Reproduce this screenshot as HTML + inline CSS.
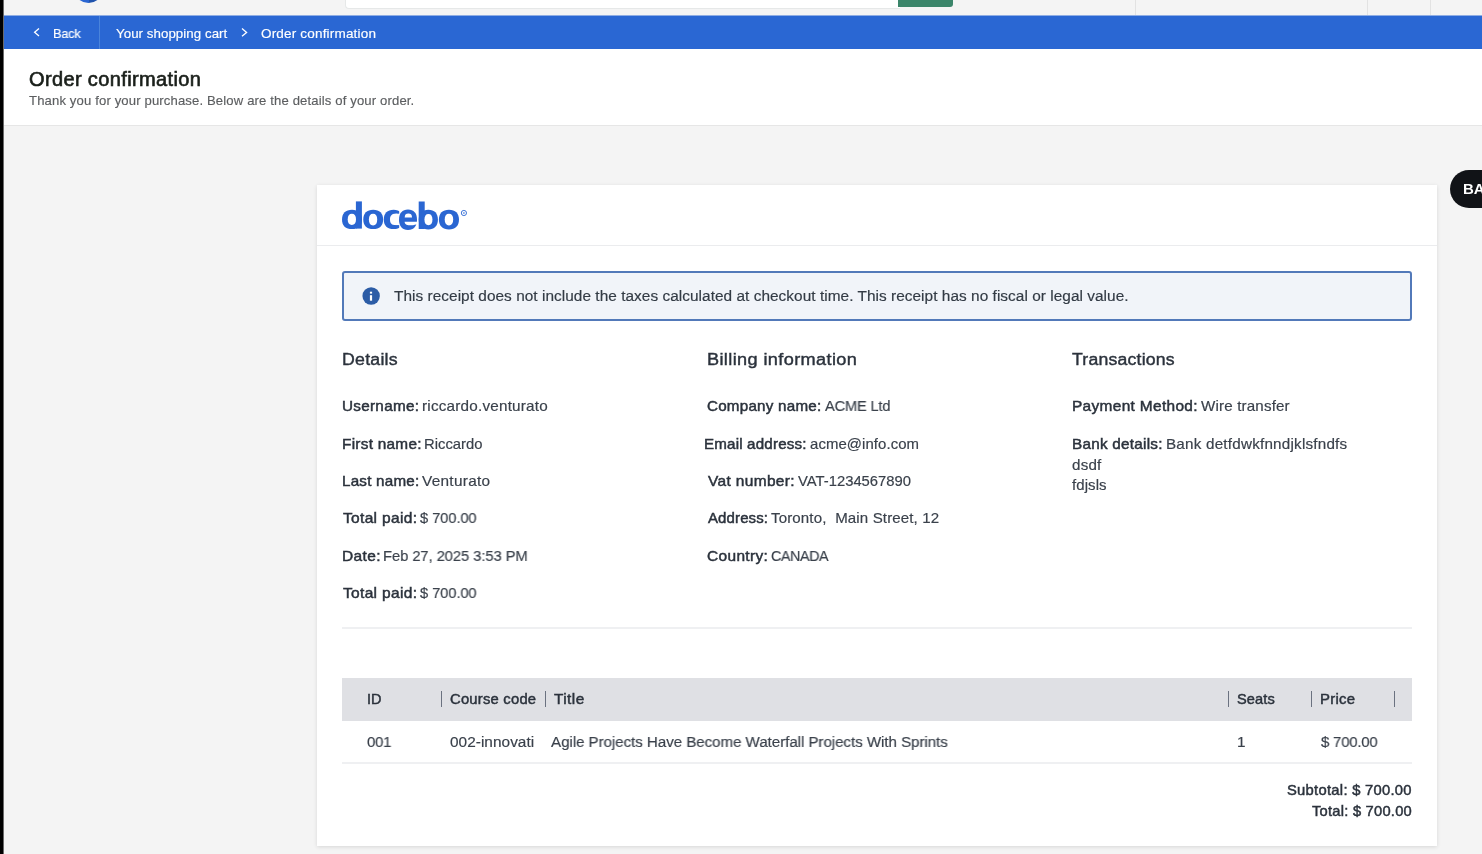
<!DOCTYPE html>
<html><head><meta charset="utf-8"><style>
*{box-sizing:border-box;margin:0;padding:0}
html,body{width:1482px;height:854px;overflow:hidden;background:#f4f4f4;font-family:"Liberation Sans",sans-serif}
.t{position:absolute;white-space:nowrap;line-height:0;will-change:transform;transform-origin:0 0}
.a{position:absolute}
</style></head><body>
<div class="a" style="left:0;top:0;width:1482px;height:15px;background:#f4f4f4"></div>
<div class="a" style="left:74px;top:-25.8px;width:28.8px;height:28.8px;border-radius:50%;background:linear-gradient(90deg,#2a66d2 0%,#2a66d2 53%,#1f52ac 53%,#1f52ac 100%)"></div>
<div class="a" style="left:345px;top:-5px;width:555px;height:14px;background:#fff;border:1px solid #e6e8e8;border-right:0;border-radius:0 0 0 4px"></div>
<div class="a" style="left:898px;top:-4px;width:55px;height:11px;background:#3b856a;border-radius:0 0 3px 0"></div>
<div class="a" style="left:1135px;top:0;width:1px;height:15px;background:#e2e2e2"></div>
<div class="a" style="left:1367px;top:0;width:1px;height:15px;background:#e2e2e2"></div>
<div class="a" style="left:1430px;top:0;width:1px;height:15px;background:#e2e2e2"></div>
<div class="a" style="left:0;top:15px;width:1482px;height:1px;background:#8fade3"></div><div class="a" style="left:0;top:16px;width:1482px;height:33px;background:#2a67d3"></div>
<div class="a" style="left:99px;top:16px;width:1px;height:33px;background:#4a84db"></div>
<div class="a" style="left:0;top:49px;width:1482px;height:76px;background:#fff"></div>
<div class="a" style="left:0;top:125px;width:1482px;height:1px;background:#e6e6e6"></div>
<div class="a" style="left:317px;top:185px;width:1120px;height:661px;background:#fff;box-shadow:0 1px 4px rgba(0,0,0,0.12)"></div>
<div class="a" style="left:317px;top:245px;width:1120px;height:1px;background:#ebecee"></div>
<div class="a" style="left:342px;top:271px;width:1070px;height:50px;background:#f1f4f9;border:2px solid #5279b9;border-radius:3px"></div>
<div class="a" style="left:342px;top:627px;width:1070px;height:2px;background:#eff0f2"></div>
<div class="a" style="left:342px;top:678px;width:1070px;height:43px;background:#dfe0e4"></div>
<div class="a" style="left:342px;top:762px;width:1070px;height:2px;background:#eff0f2"></div>
<div class="a" style="left:0;top:0;width:3px;height:854px;background:#000"></div><div class="a" style="left:3px;top:0;width:1px;height:854px;background:#6a6a6a"></div>
<div class="a" style="left:1450px;top:170px;width:60px;height:38px;border-radius:19px;background:#111317"></div>
<div class="t" style="left:1462.5px;top:189px;font-size:15px;font-weight:700;color:#fff">BA</div>
<svg class="a" style="left:0;top:0" width="1482" height="854" viewBox="0 0 1482 854">
<path d="M362.00 219.40 C362.00 225.61 358.40 229.10 352.00 229.10 C345.60 229.10 342.00 225.61 342.00 219.40 C342.00 213.19 345.60 209.70 352.00 209.70 C358.40 209.70 362.00 213.19 362.00 219.40 Z" fill="#2a66d2"/>
<rect x="355.9" y="201.4" width="6" height="27.2" fill="#2a66d2"/>
<path d="M356.00 219.35 C356.00 223.08 354.59 225.00 351.85 225.00 C349.11 225.00 347.70 223.08 347.70 219.35 C347.70 215.62 349.11 213.70 351.85 213.70 C354.59 213.70 356.00 215.62 356.00 219.35 Z" fill="#fff"/>
<path d="M383.10 219.40 C383.10 225.61 379.54 229.10 373.20 229.10 C366.86 229.10 363.30 225.61 363.30 219.40 C363.30 213.19 366.86 209.70 373.20 209.70 C379.54 209.70 383.10 213.19 383.10 219.40 Z" fill="#2a66d2"/>
<path d="M377.20 219.60 C377.20 223.49 375.79 225.50 373.05 225.50 C370.31 225.50 368.90 223.49 368.90 219.60 C368.90 215.71 370.31 213.70 373.05 213.70 C375.79 213.70 377.20 215.71 377.20 219.60 Z" fill="#fff"/>
<path d="M403.40 219.40 C403.40 225.61 399.87 229.10 393.60 229.10 C387.33 229.10 383.80 225.61 383.80 219.40 C383.80 213.19 387.33 209.70 393.60 209.70 C399.87 209.70 403.40 213.19 403.40 219.40 Z" fill="#2a66d2"/>
<path d="M400.80 219.40 C400.80 223.16 398.96 225.10 395.40 225.10 C391.84 225.10 390.00 223.16 390.00 219.40 C390.00 215.64 391.84 213.70 395.40 213.70 C398.96 213.70 400.80 215.64 400.80 219.40 Z" fill="#fff"/>
<rect x="395.4" y="213.7" width="8" height="11.4" fill="#fff"/>
<rect x="399.2" y="208" width="6" height="23" fill="#fff"/>
<path d="M417.00 219.75 C417.00 226.28 413.76 229.95 408.00 229.95 C402.24 229.95 399.00 226.28 399.00 219.75 C399.00 213.22 402.24 209.55 408.00 209.55 C413.76 209.55 417.00 213.22 417.00 219.75 Z" fill="#2a66d2"/>
<path d="M404.7 217.5 C404.8 214.6 406 213.6 408.35 213.6 C410.7 213.6 411.9 214.6 412 217.5 Z" fill="#fff"/>
<path d="M404.6 221.7 L418 221.7 L418 224.5 L415.8 224.5 C413.5 225.2 411.5 225.4 409.8 225.3 C406 225.1 404.8 223.8 404.6 221.7 Z" fill="#fff"/>
<rect x="418.7" y="201.5" width="6" height="27.5" fill="#2a66d2"/>
<path d="M437.90 219.60 C437.90 225.94 434.44 229.50 428.30 229.50 C422.16 229.50 418.70 225.94 418.70 219.60 C418.70 213.26 422.16 209.70 428.30 209.70 C434.44 209.70 437.90 213.26 437.90 219.60 Z" fill="#2a66d2"/>
<path d="M432.45 219.60 C432.45 223.30 431.09 225.20 428.45 225.20 C425.81 225.20 424.45 223.30 424.45 219.60 C424.45 215.90 425.81 214.00 428.45 214.00 C431.09 214.00 432.45 215.90 432.45 219.60 Z" fill="#fff"/>
<path d="M459.00 219.60 C459.00 225.94 455.38 229.50 448.95 229.50 C442.52 229.50 438.90 225.94 438.90 219.60 C438.90 213.26 442.52 209.70 448.95 209.70 C455.38 209.70 459.00 213.26 459.00 219.60 Z" fill="#2a66d2"/>
<path d="M453.20 219.60 C453.20 223.43 451.75 225.40 448.95 225.40 C446.14 225.40 444.70 223.43 444.70 219.60 C444.70 215.77 446.14 213.80 448.95 213.80 C451.75 213.80 453.20 215.77 453.20 219.60 Z" fill="#fff"/>
<circle cx="463.9" cy="213" r="2.6" fill="none" stroke="#2a66d2" stroke-width="0.9"/>
<circle cx="463.9" cy="213" r="1" fill="#2a66d2" opacity="0.6"/>
<circle cx="371.15" cy="296" r="8.7" fill="#2c5ca6"/>
<rect x="369.9" y="291.7" width="2.2" height="1.9" fill="#fff"/>
<rect x="369.9" y="295.2" width="2.2" height="5.5" fill="#fff"/>
<path d="M39 28.4 L34.6 32.2 L39 36" fill="none" stroke="#fff" stroke-width="1.3"/>
<path d="M242 28.6 L246.6 32.5 L242 36.3" fill="none" stroke="#fff" stroke-width="1.3"/>
<g fill="#6b7280">
<rect x="441" y="691" width="1" height="16"/>
<rect x="545" y="691" width="1" height="16"/>
<rect x="1228" y="691" width="1" height="16"/>
<rect x="1311" y="691" width="1" height="16"/>
<rect x="1394" y="691" width="1" height="16"/>
</g>
</svg>
<div class="t" style="left:53.15px;top:34.00px;font-size:13.2px;color:#ffffff;transform:scaleX(0.9724);letter-spacing:-0.270px;-webkit-text-stroke:0.16px #ffffff;">Back</div>
<div class="t" style="left:115.75px;top:34.00px;font-size:13.2px;color:#ffffff;transform:scaleX(1.0081);letter-spacing:0.052px;-webkit-text-stroke:0.16px #ffffff;">Your shopping cart</div>
<div class="t" style="left:261.17px;top:34.00px;font-size:13.2px;color:#ffffff;transform:scaleX(1.0264);letter-spacing:0.163px;-webkit-text-stroke:0.16px #ffffff;">Order confirmation</div>
<div class="t" style="left:28.52px;top:80.00px;font-size:19.3px;color:#1a1f1a;transform:scaleX(1.0382);letter-spacing:0.343px;-webkit-text-stroke:0.62px #1a1f1a;">Order confirmation</div>
<div class="t" style="left:28.82px;top:101.00px;font-size:12.8px;color:#5c5e60;transform:scaleX(1.0238);letter-spacing:0.133px;-webkit-text-stroke:0.15px #5c5e60;">Thank you for your purchase. Below are the details of your order.</div>
<div class="t" style="left:393.98px;top:296.00px;font-size:15.3px;color:#333b45;transform:scaleX(1.0060);letter-spacing:0.039px;-webkit-text-stroke:0.18px #333b45;">This receipt does not include the taxes calculated at checkout time. This receipt has no fiscal or legal value.</div>
<div class="t" style="left:341.89px;top:359.00px;font-size:17.3px;color:#2b323c;transform:scaleX(1.0265);letter-spacing:0.221px;-webkit-text-stroke:0.42px #2b323c;">Details</div>
<div class="t" style="left:706.86px;top:359.00px;font-size:17.3px;color:#2b323c;transform:scaleX(1.0498);letter-spacing:0.354px;-webkit-text-stroke:0.42px #2b323c;">Billing information</div>
<div class="t" style="left:1071.86px;top:359.00px;font-size:17.3px;color:#2b323c;transform:scaleX(1.0225);letter-spacing:0.196px;-webkit-text-stroke:0.42px #2b323c;">Transactions</div>
<div class="t" style="left:341.80px;top:406.00px;font-size:14.8px;color:#2b323c;transform:scaleX(1.0319);letter-spacing:0.272px;-webkit-text-stroke:0.47px #2b323c;">Username:</div>
<div class="t" style="left:421.90px;top:406.00px;font-size:14.8px;color:#3a414b;transform:scaleX(1.0308);letter-spacing:0.206px;-webkit-text-stroke:0.18px #3a414b;">riccardo.venturato</div>
<div class="t" style="left:341.72px;top:444.00px;font-size:14.8px;color:#2b323c;transform:scaleX(1.0378);letter-spacing:0.262px;-webkit-text-stroke:0.47px #2b323c;">First name:</div>
<div class="t" style="left:423.90px;top:444.00px;font-size:14.8px;color:#3a414b;transform:scaleX(1.0010);letter-spacing:0.008px;-webkit-text-stroke:0.18px #3a414b;">Riccardo</div>
<div class="t" style="left:341.73px;top:481.00px;font-size:14.8px;color:#2b323c;transform:scaleX(1.0278);letter-spacing:0.214px;-webkit-text-stroke:0.47px #2b323c;">Last name:</div>
<div class="t" style="left:422.32px;top:481.00px;font-size:14.8px;color:#3a414b;transform:scaleX(1.0377);letter-spacing:0.286px;-webkit-text-stroke:0.18px #3a414b;">Venturato</div>
<div class="t" style="left:342.64px;top:518.00px;font-size:14.8px;color:#2b323c;transform:scaleX(1.0486);letter-spacing:0.307px;-webkit-text-stroke:0.47px #2b323c;">Total paid:</div>
<div class="t" style="left:420.04px;top:518.00px;font-size:14.8px;color:#3a414b;transform:scaleX(0.9914);letter-spacing:-0.071px;-webkit-text-stroke:0.18px #3a414b;">$ 700.00</div>
<div class="t" style="left:341.71px;top:556.00px;font-size:14.8px;color:#2b323c;transform:scaleX(1.0458);letter-spacing:0.364px;-webkit-text-stroke:0.47px #2b323c;">Date:</div>
<div class="t" style="left:382.61px;top:556.00px;font-size:14.8px;color:#3a414b;transform:scaleX(0.9939);letter-spacing:-0.046px;-webkit-text-stroke:0.18px #3a414b;">Feb 27, 2025 3:53 PM</div>
<div class="t" style="left:342.64px;top:593.00px;font-size:14.8px;color:#2b323c;transform:scaleX(1.0486);letter-spacing:0.307px;-webkit-text-stroke:0.47px #2b323c;">Total paid:</div>
<div class="t" style="left:420.04px;top:593.00px;font-size:14.8px;color:#3a414b;transform:scaleX(0.9914);letter-spacing:-0.071px;-webkit-text-stroke:0.18px #3a414b;">$ 700.00</div>
<div class="t" style="left:707.28px;top:406.00px;font-size:14.8px;color:#2b323c;transform:scaleX(1.0259);letter-spacing:0.225px;-webkit-text-stroke:0.47px #2b323c;">Company name:</div>
<div class="t" style="left:824.79px;top:406.00px;font-size:14.8px;color:#3a414b;transform:scaleX(0.9848);letter-spacing:-0.147px;-webkit-text-stroke:0.18px #3a414b;">ACME Ltd</div>
<div class="t" style="left:704.33px;top:444.00px;font-size:14.8px;color:#2b323c;transform:scaleX(1.0236);letter-spacing:0.170px;-webkit-text-stroke:0.47px #2b323c;">Email address:</div>
<div class="t" style="left:809.99px;top:444.00px;font-size:14.8px;color:#3a414b;transform:scaleX(1.0091);letter-spacing:0.079px;-webkit-text-stroke:0.18px #3a414b;">acme@info.com</div>
<div class="t" style="left:707.97px;top:481.00px;font-size:14.8px;color:#2b323c;transform:scaleX(1.0449);letter-spacing:0.338px;-webkit-text-stroke:0.47px #2b323c;">Vat number:</div>
<div class="t" style="left:798.21px;top:481.00px;font-size:14.8px;color:#3a414b;transform:scaleX(1.0001);letter-spacing:0.001px;-webkit-text-stroke:0.18px #3a414b;">VAT-1234567890</div>
<div class="t" style="left:708.04px;top:518.00px;font-size:14.8px;color:#2b323c;transform:scaleX(1.0137);letter-spacing:0.111px;-webkit-text-stroke:0.47px #2b323c;">Address:</div>
<div class="t" style="left:771.09px;top:518.00px;font-size:14.8px;color:#3a414b;transform:scaleX(1.0189);letter-spacing:0.125px;-webkit-text-stroke:0.18px #3a414b;">Toronto, &nbsp;Main Street, 12</div>
<div class="t" style="left:707.27px;top:556.00px;font-size:14.8px;color:#2b323c;transform:scaleX(1.0445);letter-spacing:0.330px;-webkit-text-stroke:0.47px #2b323c;">Country:</div>
<div class="t" style="left:771.07px;top:556.00px;font-size:14.8px;color:#3a414b;transform:scaleX(0.9658);letter-spacing:-0.433px;-webkit-text-stroke:0.18px #3a414b;">CANADA</div>
<div class="t" style="left:1071.51px;top:406.00px;font-size:14.8px;color:#2b323c;transform:scaleX(1.0416);letter-spacing:0.325px;-webkit-text-stroke:0.47px #2b323c;">Payment Method:</div>
<div class="t" style="left:1200.82px;top:406.00px;font-size:14.8px;color:#3a414b;transform:scaleX(1.0234);letter-spacing:0.161px;-webkit-text-stroke:0.18px #3a414b;">Wire transfer</div>
<div class="t" style="left:1071.52px;top:444.00px;font-size:14.8px;color:#2b323c;transform:scaleX(1.0339);letter-spacing:0.226px;-webkit-text-stroke:0.47px #2b323c;">Bank details:</div>
<div class="t" style="left:1165.67px;top:444.00px;font-size:14.8px;color:#3a414b;transform:scaleX(1.0296);letter-spacing:0.203px;-webkit-text-stroke:0.18px #3a414b;">Bank detfdwkfnndjklsfndfs</div>
<div class="t" style="left:1071.98px;top:465.00px;font-size:14.8px;color:#3a414b;transform:scaleX(1.0244);letter-spacing:0.218px;-webkit-text-stroke:0.18px #3a414b;">dsdf</div>
<div class="t" style="left:1072.37px;top:485.00px;font-size:14.8px;color:#3a414b;transform:scaleX(1.0123);letter-spacing:0.081px;-webkit-text-stroke:0.18px #3a414b;">fdjsls</div>
<div class="t" style="left:367.03px;top:699.00px;font-size:14.4px;color:#2b323c;transform:scaleX(1.0071);letter-spacing:0.091px;-webkit-text-stroke:0.46px #2b323c;">ID</div>
<div class="t" style="left:450.20px;top:699.00px;font-size:14.4px;color:#2b323c;transform:scaleX(1.0276);letter-spacing:0.217px;-webkit-text-stroke:0.46px #2b323c;">Course code</div>
<div class="t" style="left:554.14px;top:699.00px;font-size:14.4px;color:#2b323c;transform:scaleX(1.0676);letter-spacing:0.414px;-webkit-text-stroke:0.46px #2b323c;">Title</div>
<div class="t" style="left:1237.08px;top:699.00px;font-size:14.4px;color:#2b323c;transform:scaleX(1.0138);letter-spacing:0.123px;-webkit-text-stroke:0.46px #2b323c;">Seats</div>
<div class="t" style="left:1319.94px;top:699.00px;font-size:14.4px;color:#2b323c;transform:scaleX(1.0363);letter-spacing:0.275px;-webkit-text-stroke:0.46px #2b323c;">Price</div>
<div class="t" style="left:366.69px;top:742.00px;font-size:15.3px;color:#3a414b;transform:scaleX(0.9762);letter-spacing:-0.296px;-webkit-text-stroke:0.18px #3a414b;">001</div>
<div class="t" style="left:450.18px;top:742.00px;font-size:15.3px;color:#3a414b;transform:scaleX(1.0050);letter-spacing:0.037px;-webkit-text-stroke:0.18px #3a414b;">002-innovati</div>
<div class="t" style="left:551.09px;top:742.00px;font-size:15.3px;color:#3a414b;transform:scaleX(0.9910);letter-spacing:-0.065px;-webkit-text-stroke:0.18px #3a414b;">Agile Projects Have Become Waterfall Projects With Sprints</div>
<div class="t" style="left:1237.34px;top:742.00px;font-size:15.3px;color:#3a414b;-webkit-text-stroke:0.18px #3a414b;">1</div>
<div class="t" style="left:1320.84px;top:742.00px;font-size:15.3px;color:#3a414b;transform:scaleX(0.9762);letter-spacing:-0.206px;-webkit-text-stroke:0.18px #3a414b;">$ 700.00</div>
<div class="t" style="left:1287.07px;top:790.00px;font-size:14.2px;color:#2b323c;transform:scaleX(1.0408);letter-spacing:0.264px;-webkit-text-stroke:0.45px #2b323c;">Subtotal: $ 700.00</div>
<div class="t" style="left:1311.84px;top:811.00px;font-size:14.2px;color:#2b323c;transform:scaleX(1.0360);letter-spacing:0.230px;-webkit-text-stroke:0.45px #2b323c;">Total: $ 700.00</div>

</body></html>
